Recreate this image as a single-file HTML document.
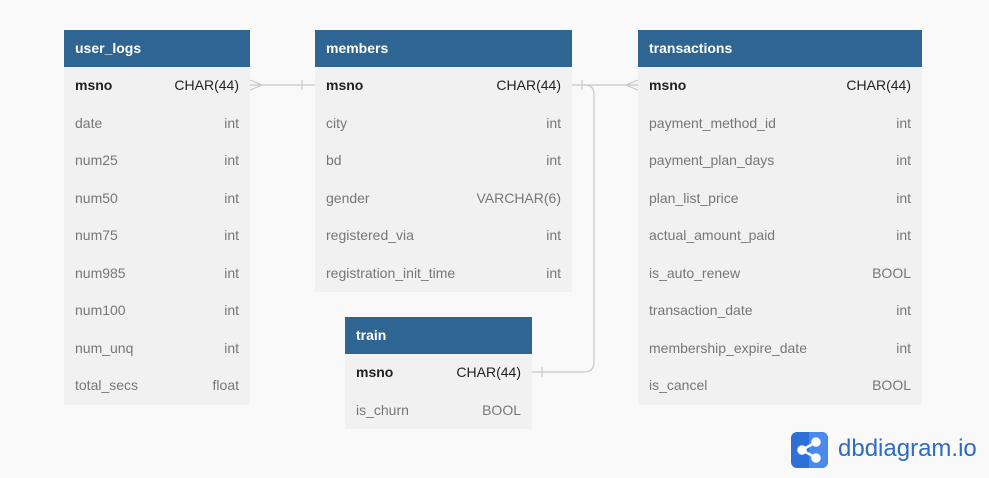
<!DOCTYPE html><html><head><style>
body{margin:0;width:989px;height:478px;background:#f9f9fa;font-family:"Liberation Sans",sans-serif;position:relative;overflow:hidden}
.t{position:absolute;background:#f1f1f1}
.h{background:#2e6592;color:#fff;font-weight:bold;font-size:14px;height:37px;line-height:37px;padding-left:11px}
.r{height:37.5px;line-height:37.5px;font-size:14px;color:#777;padding:0 11px;display:flex;justify-content:space-between}
.r.k{color:#222;font-weight:bold}
.r.k span:last-child{font-weight:normal;color:#222}
</style></head><body>
<svg style="position:absolute;left:0;top:0" width="989" height="478">
<g stroke="#c8c8c8" stroke-width="1.2" fill="none">
<path d="M250 85H315M250 80L262 85L250 90M302 80V90"/>
<path d="M572 85H638M582 80V90M638 80L626 85L638 90"/>
<path d="M585 85Q594 85 594 95V362Q594 372 584 372H532M542 367V377"/>
</g></svg>
<div class="t" style="left:64px;top:30px;width:186px">
<div class="h">user_logs</div>
<div class="r k"><span>msno</span><span>CHAR(44)</span></div>
<div class="r"><span>date</span><span>int</span></div>
<div class="r"><span>num25</span><span>int</span></div>
<div class="r"><span>num50</span><span>int</span></div>
<div class="r"><span>num75</span><span>int</span></div>
<div class="r"><span>num985</span><span>int</span></div>
<div class="r"><span>num100</span><span>int</span></div>
<div class="r"><span>num_unq</span><span>int</span></div>
<div class="r"><span>total_secs</span><span>float</span></div>
</div>
<div class="t" style="left:315px;top:30px;width:257px">
<div class="h">members</div>
<div class="r k"><span>msno</span><span>CHAR(44)</span></div>
<div class="r"><span>city</span><span>int</span></div>
<div class="r"><span>bd</span><span>int</span></div>
<div class="r"><span>gender</span><span>VARCHAR(6)</span></div>
<div class="r"><span>registered_via</span><span>int</span></div>
<div class="r"><span>registration_init_time</span><span>int</span></div>
</div>
<div class="t" style="left:638px;top:30px;width:284px">
<div class="h">transactions</div>
<div class="r k"><span>msno</span><span>CHAR(44)</span></div>
<div class="r"><span>payment_method_id</span><span>int</span></div>
<div class="r"><span>payment_plan_days</span><span>int</span></div>
<div class="r"><span>plan_list_price</span><span>int</span></div>
<div class="r"><span>actual_amount_paid</span><span>int</span></div>
<div class="r"><span>is_auto_renew</span><span>BOOL</span></div>
<div class="r"><span>transaction_date</span><span>int</span></div>
<div class="r"><span>membership_expire_date</span><span>int</span></div>
<div class="r"><span>is_cancel</span><span>BOOL</span></div>
</div>
<div class="t" style="left:345px;top:317px;width:187px">
<div class="h">train</div>
<div class="r k"><span>msno</span><span>CHAR(44)</span></div>
<div class="r"><span>is_churn</span><span>BOOL</span></div>
</div>
<svg style="position:absolute;left:791px;top:432px" width="37" height="36" viewBox="0 0 37 36">
<rect width="37" height="36" rx="6" fill="#2f6fd8"/><rect x="18" width="19" height="36" rx="6" fill="#4a8ae8"/><rect x="18" width="6" height="36" fill="#4a8ae8"/>
<g stroke="#fff" stroke-width="2.5" fill="#fff"><path d="M11 18L25 10M11 18L25 26"/><circle cx="11" cy="18" r="3.5"/><circle cx="25" cy="10" r="3.5"/><circle cx="25" cy="26" r="3.5"/></g>
</svg>
<div style="position:absolute;left:838px;top:435px;font-size:24px;color:#2d6cbf">dbdiagram.io</div>
</body></html>
